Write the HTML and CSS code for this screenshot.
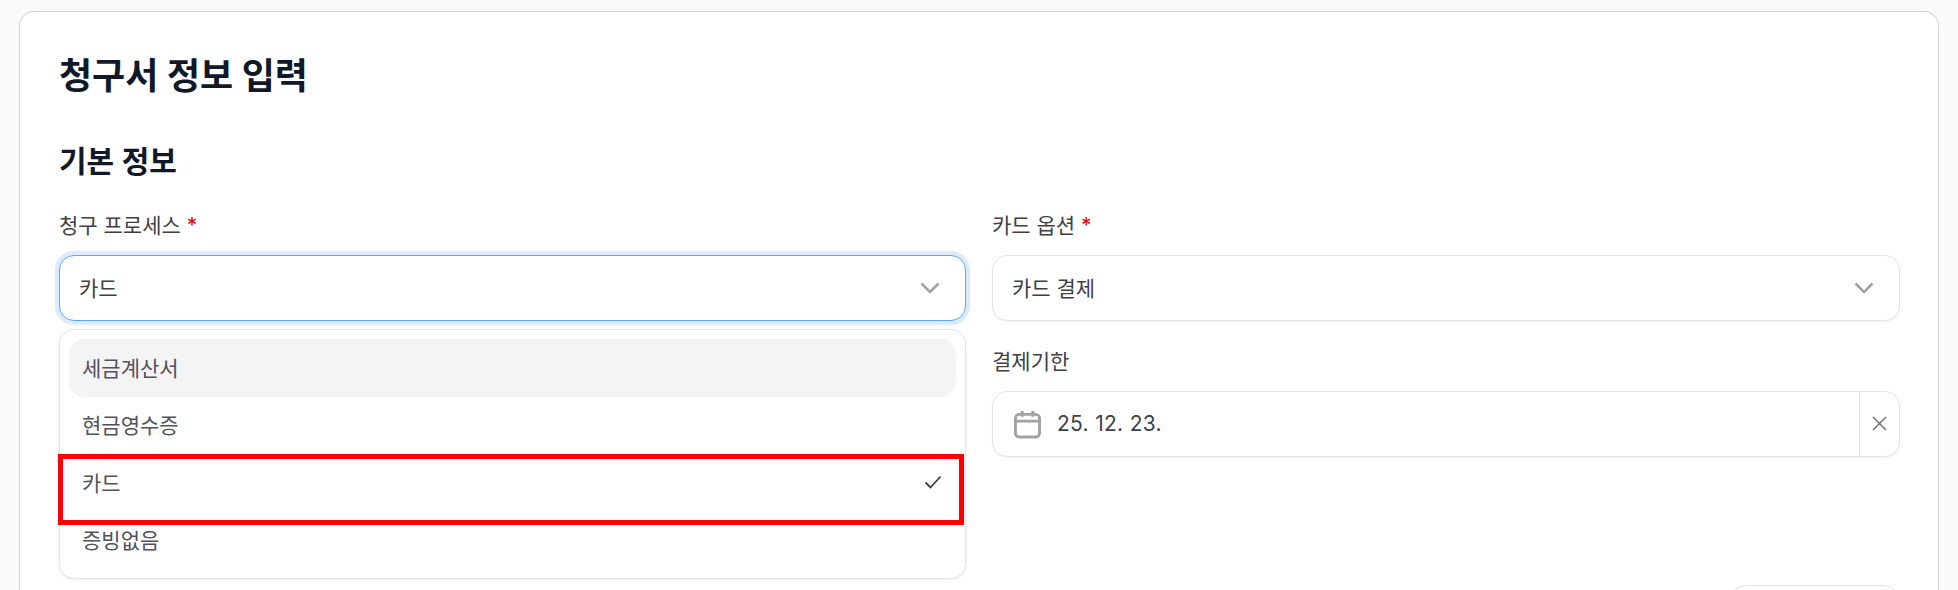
FILE: index.html
```html
<!DOCTYPE html>
<html lang="ko">
<head>
<meta charset="utf-8">
<title>청구서 정보 입력</title>
<link rel="stylesheet" href="styles.css">
</head>
<body>
<main class="card">
  <h1 class="title">청구서 정보 입력</h1>
  <h2 class="section">기본 정보</h2>
  <div class="grid">
    <div class="field">
      <label class="label">청구 프로세스 <span class="req">*</span></label>
      <div class="select focused">
        <span class="val">카드</span>
        <svg class="chev" viewBox="0 0 20 12"><path d="M1.500 1.500 10 10l8.500-8.500"/></svg>
      </div>
      <div class="menu">
        <div class="opt hover">세금계산서</div>
        <div class="opt">현금영수증</div>
        <div class="opt">카드<svg class="check" viewBox="0 0 18 14"><path d="M1.500 7.500 6.500 12.500 16.500 1.500"/></svg></div>
        <div class="opt">증빙없음</div>
      </div>
      <div class="mark"></div>
    </div>
    <div class="field">
      <label class="label">카드 옵션 <span class="req">*</span></label>
      <div class="select">
        <span class="val">카드 결제</span>
        <svg class="chev" viewBox="0 0 20 12"><path d="M1.500 1.500 10 10l8.500-8.500"/></svg>
      </div>
    </div>
    <div class="field spacer"></div>
    <div class="field">
      <label class="label">결제기한</label>
      <div class="select date">
        <svg class="cal" viewBox="0 0 28 30"><rect x="1.500" y="5" width="25" height="23.500" rx="4"/><path d="M1.500 12h25M8.500 1.500v6M19.500 1.500v6"/></svg>
        <span class="dateval">25. 12. 23.</span>
        <div class="clear"><svg viewBox="0 0 15 15"><path d="M1 1l13 13M14 1 1 14"/></svg></div>
      </div>
    </div>
  </div>
  <button class="next" type="button"></button>
</main>
</body>
</html>
```

FILE: styles.css
```css
* { box-sizing: border-box; }
html, body { margin: 0; height: 590px; overflow: hidden; }
body {
  background: #fafafa;
  padding: 11px 19px 0;
  font-family: Inter, "Noto Sans CJK KR", sans-serif;
  color: #3f3f46;
}
.card {
  position: relative;
  width: 1920px;
  height: 579px;
  overflow: hidden;
  background: #fff;
  border: 1px solid #d4d4d8;
  border-bottom: 0;
  border-radius: 15px 15px 0 0;
  padding: 39px 39px 0;
}
.title {
  margin: 0;
  font-size: 36px;
  line-height: 50px;
  font-weight: 700;
  color: #111827;
}
.section {
  margin: 37px 0 0;
  font-size: 30px;
  line-height: 46px;
  font-weight: 600;
  color: #111827;
}
.grid {
  display: grid;
  grid-template-columns: 907px 907.500px;
  column-gap: 26px;
  row-gap: 26px;
  margin-top: 27px;
}
.field { position: relative; }
.label {
  display: block;
  font-size: 21px;
  line-height: 30px;
  font-weight: 400;
  color: #3f3f46;
  margin-bottom: 14.300px;
}
.req { color: #e60000; }
.select {
  display: flex;
  align-items: center;
  height: 65.500px;
  padding: 0 25px 0 19px;
  background: #fff;
  border: 1px solid #e4e4e7;
  border-radius: 15px;
  box-shadow: 0 1px 2px rgba(0,0,0,.06);
  font-size: 21px;
  justify-content: space-between;
}
.val { margin-bottom: 3px; }
.focused {
  border-color: #60a5fa;
  box-shadow: 0 0 0 4px #dbeafe;
}
.chev { width: 20px; height: 12px; }
.chev path { fill: none; stroke: #a1a1aa; stroke-width: 2.500; }
.menu {
  position: absolute;
  left: 0;
  right: 0;
  top: 118px;
  height: 250px;
  padding: 9px;
  background: #fff;
  border: 1px solid #e4e4e7;
  border-radius: 15px;
  box-shadow: 0 1px 3px rgba(0,0,0,.08);
  z-index: 2;
}
.opt {
  display: flex;
  align-items: center;
  justify-content: space-between;
  height: 57.500px;
  padding: 0 13px 2px;
  font-size: 21px;
  color: #52525b;
  border-radius: 15px;
}
.hover { background: #f4f4f5; }
.check { width: 18px; height: 14px; margin-right: 1px; }
.check path { fill: none; stroke: #3f3f46; stroke-width: 1.800; }
.mark {
  position: absolute;
  left: -1px;
  width: 906px;
  top: 243px;
  height: 71px;
  border: 5px solid #ff0000;
  z-index: 3;
}
.date { padding: 0 0 0 21px; justify-content: flex-start; }
.cal { width: 27px; height: 30px; flex: none; }
.cal rect, .cal path { fill: none; stroke: #a1a1aa; stroke-width: 3; }
.dateval { margin-left: 16px; flex: 1; letter-spacing: .3px; }
.clear {
  width: 40px;
  height: 100%;
  border-left: 1px solid #e4e4e7;
  display: flex;
  align-items: center;
  justify-content: center;
}
.clear svg { width: 15px; height: 15px; }
.clear path { fill: none; stroke: #71717a; stroke-width: 1.500; }
.spacer { height: 0; }
.next {
  position: absolute;
  right: 39px;
  top: 573px;
  width: 169px;
  height: 50px;
  background: #fff;
  border: 1px solid #e4e4e7;
  border-radius: 15px;
}
```
